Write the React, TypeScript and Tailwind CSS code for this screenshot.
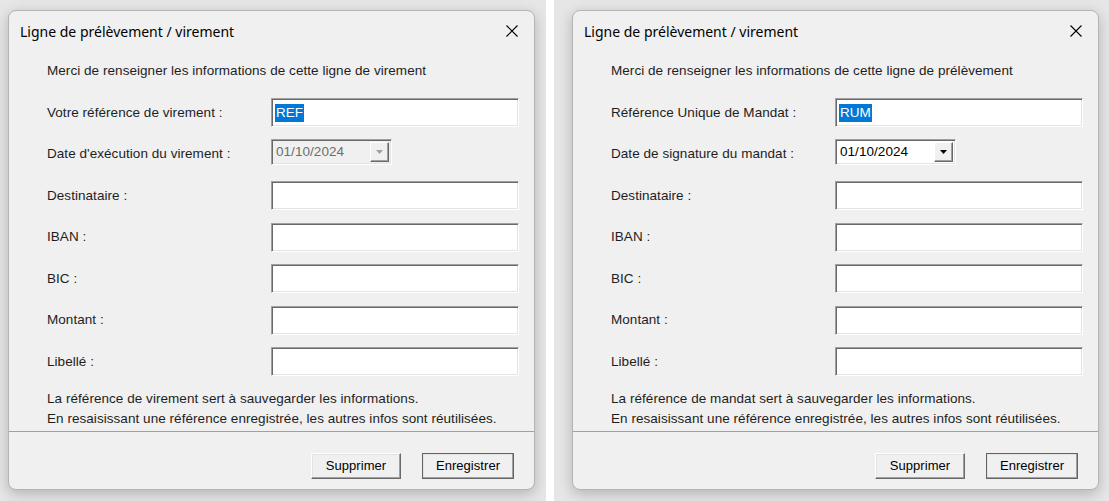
import React from 'react';

const body = { fontFamily: '"Liberation Sans", Arial, sans-serif' };
const title = { fontFamily: '"Noto Sans", "Open Sans", sans-serif' };

interface DialogProps {
  intro: string;
  refLabel: string;
  refValue: string;
  dateLabel: string;
  dateDisabled?: boolean;
  note: string;
}

const sunken =
  'border border-t-[#a0a0a0] border-l-[#a0a0a0] border-b-white border-r-white shadow-[inset_1px_1px_0_#696969,inset_-1px_-1px_0_#e3e3e3]';

function TextBox({ children }: { children?: React.ReactNode }) {
  return (
    <div className={`h-[29px] w-[248px] bg-white ${sunken} flex items-center pl-[3px]`}>
      {children}
    </div>
  );
}

function DateCombo({ disabled }: { disabled?: boolean }) {
  return (
    <div
      className={`mb-[5px] h-[26px] w-[121px] ${sunken} flex items-stretch p-[2px] ${
        disabled ? 'bg-[#f0f0f0]' : 'bg-white'
      }`}
    >
      <span
        className={`flex-1 pl-[2px] flex items-center text-[13.5px] ${
          disabled ? 'text-[#6d6d6d]' : 'text-black'
        }`}
      >
        01/10/2024
      </span>
      <span className="w-[19px] bg-[#f0f0f0] border border-t-white border-l-white border-b-[#696969] border-r-[#696969] shadow-[inset_-1px_-1px_0_#a0a0a0] flex items-center justify-center">
        <svg width="7" height="4" viewBox="0 0 7 4">
          <path d="M0 0h7L3.5 4z" fill={disabled ? '#a0a0a0' : '#000'} />
        </svg>
      </span>
    </div>
  );
}

function Row({ label, children }: { label: string; children: React.ReactNode }) {
  return (
    <div className="h-[41.5px] flex items-center">
      <span className="pl-[38px]">{label}</span>
      <div className="ml-auto pr-[15px]">{children}</div>
    </div>
  );
}

function Button({ label, isDefault }: { label: string; isDefault?: boolean }) {
  return (
    <button
      className={`h-[26px] ${isDefault ? 'w-[92px] outline outline-1 outline-[#646464] -outline-offset-1' : 'w-[90px]'} bg-[#f0f0f0] border border-t-white border-l-white border-b-[#696969] border-r-[#696969] shadow-[inset_-1px_-1px_0_#a0a0a0,inset_1px_1px_0_#e3e3e3] text-[13px] text-black`}
    >
      {label}
    </button>
  );
}

function Dialog({ intro, refLabel, refValue, dateLabel, dateDisabled, note }: DialogProps) {
  return (
    <div className="w-[527px] h-[480px] rounded-lg border border-[#b4b4b4] bg-[#f0f0f0] shadow-[0_4px_14px_rgba(0,0,0,0.22)] flex flex-col overflow-hidden">
      <div className="h-[40px] shrink-0 flex items-center justify-between pl-[11px] pr-[16px]">
        <span style={title} className="text-[14px] text-black">
          Ligne de prélèvement / virement
        </span>
        <svg width="12" height="12" viewBox="0 0 12 12">
          <path d="M0.5 0.5l11 11M11.5 0.5l-11 11" stroke="#000" strokeWidth="1.1" />
        </svg>
      </div>

      <div style={body} className="text-[13.5px] tracking-[0.05px] text-[#1e1e1e] flex flex-col">
        <p className="pl-[38px] mt-[12px] leading-[16px]">{intro}</p>

        <div className="mt-[13px] flex flex-col">
          <Row label={refLabel}>
            <TextBox>
              <span className="bg-[#0078d7] text-white leading-[18px] px-[1px]">{refValue}</span>
            </TextBox>
          </Row>
          <Row label={dateLabel}>
            <div className="w-[248px]">
              <DateCombo disabled={dateDisabled} />
            </div>
          </Row>
          <Row label="Destinataire :">
            <TextBox />
          </Row>
          <Row label="IBAN :">
            <TextBox />
          </Row>
          <Row label="BIC :">
            <TextBox />
          </Row>
          <Row label="Montant :">
            <TextBox />
          </Row>
          <Row label="Libellé :">
            <TextBox />
          </Row>
        </div>

        <div className="pl-[38px] mt-[6.5px] leading-[20px]">
          <p>{note}</p>
          <p>En resaisissant une référence enregistrée, les autres infos sont réutilisées.</p>
        </div>

        <div className="mt-[2px] border-t border-[#a0a0a0]" />

        <div className="flex justify-end gap-[21px] pt-[21px] pr-[20px]">
          <Button label="Supprimer" />
          <Button label="Enregistrer" isDefault />
        </div>
      </div>
    </div>
  );
}

export default function App() {
  return (
    <div className="w-[1109px] h-[501px] flex bg-white overflow-hidden">
      <div className="w-[546px] h-full bg-[#e6e6e6] pl-[8px] pt-[10px]">
        <Dialog
          intro="Merci de renseigner les informations de cette ligne de virement"
          refLabel="Votre référence de virement :"
          refValue="REF"
          dateLabel="Date d'exécution du virement :"
          dateDisabled
          note="La référence de virement sert à sauvegarder les informations."
        />
      </div>
      <div className="w-[8px] h-full bg-white" />
      <div className="flex-1 h-full bg-[#e6e6e6] pl-[18px] pt-[10px]">
        <Dialog
          intro="Merci de renseigner les informations de cette ligne de prélèvement"
          refLabel="Référence Unique de Mandat :"
          refValue="RUM"
          dateLabel="Date de signature du mandat :"
          note="La référence de mandat sert à sauvegarder les informations."
        />
      </div>
    </div>
  );
}
